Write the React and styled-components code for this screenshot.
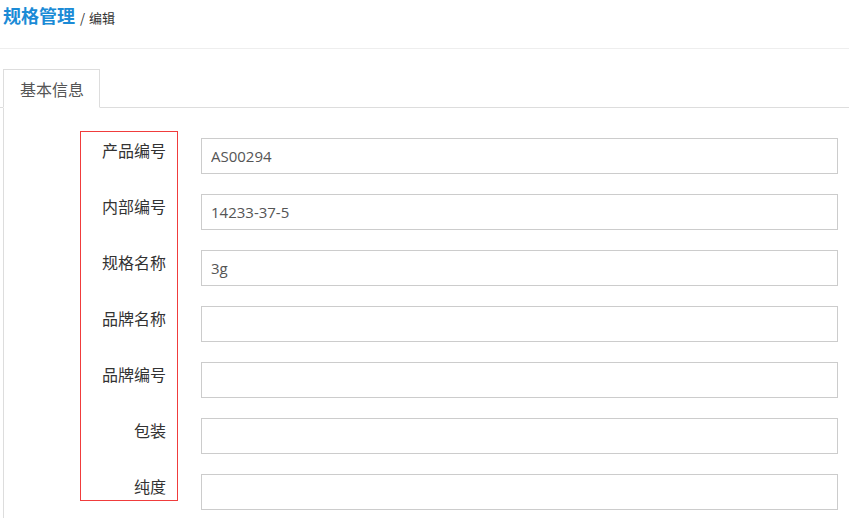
import React from "react";
import styled, { createGlobalStyle } from "styled-components";

const Global = createGlobalStyle`
  html, body { margin: 0; padding: 0; background: #fff; }
  body { font-family: "Noto Sans CJK SC", "Open Sans", sans-serif; color: #333; }
  * { box-sizing: border-box; }
`;

const Page = styled.div`
  width: 849px;
  min-height: 518px;
  overflow: hidden;
`;

const Header = styled.div`
  display: flex;
  align-items: baseline;
  height: 49px;
  padding: 2px 3px 0;
  border-bottom: 1px solid #eeeeee;
`;

const Title = styled.h1`
  margin: 0;
  font-size: 18px;
  line-height: 26px;
  font-weight: 700;
  color: #1b8bd6;
`;

const Crumb = styled.span`
  margin-left: 5px;
  font-size: 13px;
  word-spacing: 1px;
  color: #333;
`;

const TabBar = styled.div`
  display: flex;
  margin-top: 20px;
  padding-left: 3px;
  border-bottom: 1px solid #dddddd;
`;

const Tab = styled.div`
  height: 39px;
  margin-bottom: -1px;
  padding: 0 15px 0 16px;
  display: flex;
  align-items: center;
  font-size: 16px;
  color: #555;
  background: #fff;
  border: 1px solid #dddddd;
  border-bottom-color: #fff;
`;

const Panel = styled.div`
  margin-left: 3px;
  border-left: 1px solid #dddddd;
  padding: 23px 11px 0 76px;
  display: flex;
  align-items: flex-start;
  gap: 23px;
  min-height: 420px;
`;

const LabelColumn = styled.div`
  width: 98px;
  flex: none;
  border: 1px solid #f03c3c;
  padding: 6px 11px 2px 0;
  display: flex;
  flex-direction: column;
  gap: 32px;
`;

const Label = styled.label`
  display: block;
  text-align: right;
  font-size: 16px;
  line-height: 24px;
  color: #333;
`;

const FieldColumn = styled.div`
  flex: 1;
  margin-top: 7px;
  display: flex;
  flex-direction: column;
  gap: 20px;
`;

const Input = styled.input`
  display: block;
  width: 100%;
  height: 36px;
  padding: 0 9px;
  border: 1px solid #cccccc;
  border-radius: 0;
  font-family: "Open Sans", "Noto Sans CJK SC", sans-serif;
  font-size: 15px;
  color: #555;
  background: #fff;
  outline: none;
`;

const fields = [
  ["产品编号", "AS00294"],
  ["内部编号", "14233-37-5"],
  ["规格名称", "3g"],
  ["品牌名称", ""],
  ["品牌编号", ""],
  ["包装", ""],
  ["纯度", ""],
];

export default function App() {
  return (
    <Page>
      <Global />
      <Header>
        <Title>规格管理</Title>
        <Crumb>/ 编辑</Crumb>
      </Header>
      <TabBar>
        <Tab>基本信息</Tab>
      </TabBar>
      <Panel>
        <LabelColumn>
          {fields.map(([l]) => (
            <Label key={l}>{l}</Label>
          ))}
        </LabelColumn>
        <FieldColumn>
          {fields.map(([l, v]) => (
            <Input key={l} defaultValue={v} />
          ))}
        </FieldColumn>
      </Panel>
    </Page>
  );
}
